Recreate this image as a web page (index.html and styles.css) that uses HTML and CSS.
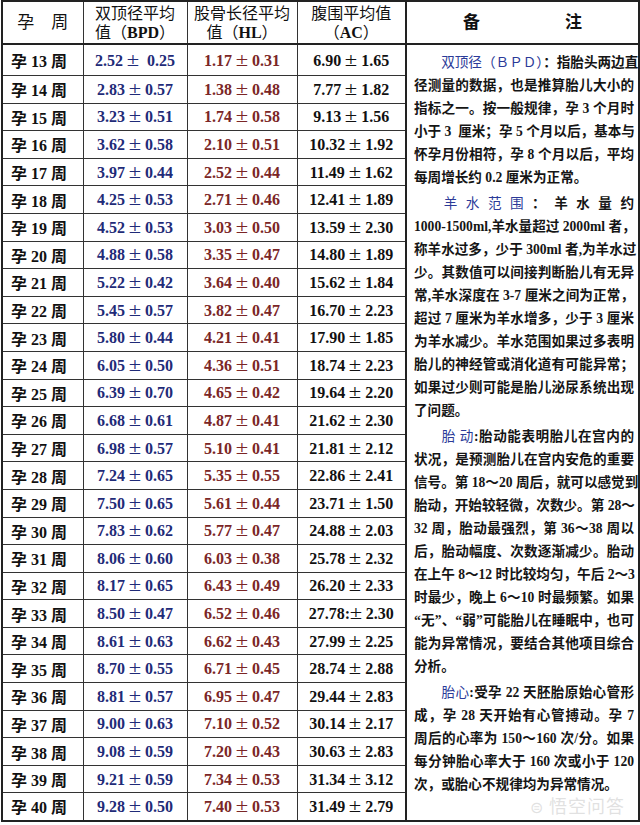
FILE: index.html
```html
<!DOCTYPE html>
<html lang="zh">
<head>
<meta charset="utf-8">
<title>孕周胎儿发育标准</title>
<link rel="stylesheet" href="styles.css">
</head>
<body>
<div class="page">
<table class="grid">
<colgroup><col class="c1"><col class="c2"><col class="c3"><col class="c4"><col class="c5"></colgroup>
<thead>
<tr class="head">
<th class="h-wk">孕　周</th>
<th>双顶径平均<br>值（<b>BPD</b>）</th>
<th>股骨长径平均<br>值（<b>HL</b>）</th>
<th>腹围平均值<br>（<b>AC</b>）</th>
<th class="h-note">备　　　　　注</th>
</tr>
</thead>
<tbody>
<tr class="r1"><td class="wk">孕 13 周</td><td class="bpd">2.52 <i>±</i>&nbsp; 0.25</td><td class="hl">1.17 <i>±</i> 0.31</td><td class="ac">6.90 <i>±</i> 1.65</td>
<td class="note" rowspan="28">
<div class="para">
<span class="ln"><span class="ind"></span><span class="lab">双顶径（ＢＰＤ）</span>：指胎头两边直</span>
<span class="ln">径测量的数据，也是推算胎儿大小的</span>
<span class="ln">指标之一。按一般规律，孕 3 个月时</span>
<span class="ln">小于 3&nbsp; 厘米；孕 5 个月以后，基本与</span>
<span class="ln">怀孕月份相符，孕 8 个月以后，平均</span>
<span class="end">每周增长约 0.2 厘米为正常。</span>
</div>
<div class="para">
<span class="ln"><span class="ind"></span><span class="lab">羊 水 范 围</span> ： 羊 水 量 约</span>
<span class="ln">1000-1500ml,羊水量超过 2000ml 者，</span>
<span class="ln">称羊水过多，少于 300ml 者,为羊水过</span>
<span class="ln">少。其数值可以间接判断胎儿有无异</span>
<span class="ln">常,羊水深度在 3-7 厘米之间为正常，</span>
<span class="ln">超过 7 厘米为羊水增多，少于 3 厘米</span>
<span class="ln">为羊水减少。羊水范围如果过多表明</span>
<span class="ln">胎儿的神经管或消化道有可能异常；</span>
<span class="ln">如果过少则可能是胎儿泌尿系统出现</span>
<span class="end">了问题。</span>
</div>
<div class="para">
<span class="ln"><span class="ind"></span><span class="lab">胎 动</span>:胎动能表明胎儿在宫内的</span>
<span class="ln">状况，是预测胎儿在宫内安危的重要</span>
<span class="ln">信号。第 18～20 周后，就可以感觉到</span>
<span class="ln">胎动，开始较轻微，次数少。第 28～</span>
<span class="ln">32 周，胎动最强烈，第 36～38 周以</span>
<span class="ln">后，胎动幅度、次数逐渐减少。胎动</span>
<span class="ln">在上午 8～12 时比较均匀，午后 2～3</span>
<span class="ln">时最少，晚上 6～10 时最频繁。如果</span>
<span class="ln">“无”、“弱”可能胎儿在睡眠中，也可</span>
<span class="ln">能为异常情况，要结合其他项目综合</span>
<span class="end">分析。</span>
</div>
<div class="para">
<span class="ln"><span class="ind"></span><span class="lab">胎心</span>:受孕 22 天胚胎原始心管形</span>
<span class="ln">成，孕 28 天开始有心管搏动。孕 7</span>
<span class="ln">周后的心率为 150～160 次/分。如果</span>
<span class="ln">每分钟胎心率大于 160 次或小于 120</span>
<span class="end">次，或胎心不规律均为异常情况。</span>
</div>
</td></tr>
<tr><td class="wk">孕 14 周</td><td class="bpd">2.83 <i>±</i> 0.57</td><td class="hl">1.38 <i>±</i> 0.48</td><td class="ac">7.77 <i>±</i> 1.82</td></tr>
<tr><td class="wk">孕 15 周</td><td class="bpd">3.23 <i>±</i> 0.51</td><td class="hl">1.74 <i>±</i> 0.58</td><td class="ac">9.13 <i>±</i> 1.56</td></tr>
<tr><td class="wk">孕 16 周</td><td class="bpd">3.62 <i>±</i> 0.58</td><td class="hl">2.10 <i>±</i> 0.51</td><td class="ac">10.32 <i>±</i> 1.92</td></tr>
<tr><td class="wk">孕 17 周</td><td class="bpd">3.97 <i>±</i> 0.44</td><td class="hl">2.52 <i>±</i> 0.44</td><td class="ac">11.49 <i>±</i> 1.62</td></tr>
<tr><td class="wk">孕 18 周</td><td class="bpd">4.25 <i>±</i> 0.53</td><td class="hl">2.71 <i>±</i> 0.46</td><td class="ac">12.41 <i>±</i> 1.89</td></tr>
<tr><td class="wk">孕 19 周</td><td class="bpd">4.52 <i>±</i> 0.53</td><td class="hl">3.03 <i>±</i> 0.50</td><td class="ac">13.59 <i>±</i> 2.30</td></tr>
<tr><td class="wk">孕 20 周</td><td class="bpd">4.88 <i>±</i> 0.58</td><td class="hl">3.35 <i>±</i> 0.47</td><td class="ac">14.80 <i>±</i> 1.89</td></tr>
<tr><td class="wk">孕 21 周</td><td class="bpd">5.22 <i>±</i> 0.42</td><td class="hl">3.64 <i>±</i> 0.40</td><td class="ac">15.62 <i>±</i> 1.84</td></tr>
<tr><td class="wk">孕 22 周</td><td class="bpd">5.45 <i>±</i> 0.57</td><td class="hl">3.82 <i>±</i> 0.47</td><td class="ac">16.70 <i>±</i> 2.23</td></tr>
<tr><td class="wk">孕 23 周</td><td class="bpd">5.80 <i>±</i> 0.44</td><td class="hl">4.21 <i>±</i> 0.41</td><td class="ac">17.90 <i>±</i> 1.85</td></tr>
<tr><td class="wk">孕 24 周</td><td class="bpd">6.05 <i>±</i> 0.50</td><td class="hl">4.36 <i>±</i> 0.51</td><td class="ac">18.74 <i>±</i> 2.23</td></tr>
<tr><td class="wk">孕 25 周</td><td class="bpd">6.39 <i>±</i> 0.70</td><td class="hl">4.65 <i>±</i> 0.42</td><td class="ac">19.64 <i>±</i> 2.20</td></tr>
<tr><td class="wk">孕 26 周</td><td class="bpd">6.68 <i>±</i> 0.61</td><td class="hl">4.87 <i>±</i> 0.41</td><td class="ac">21.62 <i>±</i> 2.30</td></tr>
<tr><td class="wk">孕 27 周</td><td class="bpd">6.98 <i>±</i> 0.57</td><td class="hl">5.10 <i>±</i> 0.41</td><td class="ac">21.81 <i>±</i> 2.12</td></tr>
<tr><td class="wk">孕 28 周</td><td class="bpd">7.24 <i>±</i> 0.65</td><td class="hl">5.35 <i>±</i> 0.55</td><td class="ac">22.86 <i>±</i> 2.41</td></tr>
<tr><td class="wk">孕 29 周</td><td class="bpd">7.50 <i>±</i> 0.65</td><td class="hl">5.61 <i>±</i> 0.44</td><td class="ac">23.71 <i>±</i> 1.50</td></tr>
<tr><td class="wk">孕 30 周</td><td class="bpd">7.83 <i>±</i> 0.62</td><td class="hl">5.77 <i>±</i> 0.47</td><td class="ac">24.88 <i>±</i> 2.03</td></tr>
<tr><td class="wk">孕 31 周</td><td class="bpd">8.06 <i>±</i> 0.60</td><td class="hl">6.03 <i>±</i> 0.38</td><td class="ac">25.78 <i>±</i> 2.32</td></tr>
<tr><td class="wk">孕 32 周</td><td class="bpd">8.17 <i>±</i> 0.65</td><td class="hl">6.43 <i>±</i> 0.49</td><td class="ac">26.20 <i>±</i> 2.33</td></tr>
<tr><td class="wk">孕 33 周</td><td class="bpd">8.50 <i>±</i> 0.47</td><td class="hl">6.52 <i>±</i> 0.46</td><td class="ac">27.78:<i>±</i> 2.30</td></tr>
<tr><td class="wk">孕 34 周</td><td class="bpd">8.61 <i>±</i> 0.63</td><td class="hl">6.62 <i>±</i> 0.43</td><td class="ac">27.99 <i>±</i> 2.25</td></tr>
<tr><td class="wk">孕 35 周</td><td class="bpd">8.70 <i>±</i> 0.55</td><td class="hl">6.71 <i>±</i> 0.45</td><td class="ac">28.74 <i>±</i> 2.88</td></tr>
<tr><td class="wk">孕 36 周</td><td class="bpd">8.81 <i>±</i> 0.57</td><td class="hl">6.95 <i>±</i> 0.47</td><td class="ac">29.44 <i>±</i> 2.83</td></tr>
<tr><td class="wk">孕 37 周</td><td class="bpd">9.00 <i>±</i> 0.63</td><td class="hl">7.10 <i>±</i> 0.52</td><td class="ac">30.14 <i>±</i> 2.17</td></tr>
<tr><td class="wk">孕 38 周</td><td class="bpd">9.08 <i>±</i> 0.59</td><td class="hl">7.20 <i>±</i> 0.43</td><td class="ac">30.63 <i>±</i> 2.83</td></tr>
<tr><td class="wk">孕 39 周</td><td class="bpd">9.21 <i>±</i> 0.59</td><td class="hl">7.34 <i>±</i> 0.53</td><td class="ac">31.34 <i>±</i> 3.12</td></tr>
<tr><td class="wk">孕 40 周</td><td class="bpd">9.28 <i>±</i> 0.50</td><td class="hl">7.40 <i>±</i> 0.53</td><td class="ac">31.49 <i>±</i> 2.79</td></tr>
</tbody>
</table>
<div class="mark"><span class="mark-logo">⊜</span> 悟空问答</div>
</div>
</body>
</html>
```
FILE: styles.css
```css
html, body {
  margin: 0;
  padding: 0;
  background: #ffffff;
}

.page {
  position: relative;
  width: 640px;
  height: 825px;
  overflow: hidden;
}

.grid {
  border-collapse: collapse;
  table-layout: fixed;
  width: 637px;
  margin: 0 0 0 1px;
  font-family: "Liberation Serif", "Noto Sans CJK SC", serif;
  color: #111;
  border: 2px solid #222;
}

.c1 { width: 81px; }
.c2 { width: 104px; }
.c3 { width: 110px; }
.c4 { width: 109px; }
.c5 { width: 233px; }

.grid th,
.grid td {
  border: 1px solid #333;
  padding: 0;
}

.grid .head {
  height: 43px;
}

.grid .head th {
  font-weight: normal;
  font-size: 16px;
  line-height: 19px;
  text-align: center;
  vertical-align: middle;
  border-bottom: 2px solid #222;
}

.grid .head th b {
  font-weight: bold;
}

.grid .head .h-wk {
  font-size: 17px;
}

.grid .head .h-note {
  font-size: 17px;
  font-weight: bold;
  border-left: 2px solid #222;
}

.grid tbody tr {
  height: 27.6px;
}

.grid tbody tr.r1 {
  height: 31.5px;
}

.grid .wk,
.grid .bpd,
.grid .hl,
.grid .ac {
  font-size: 16px;
  font-weight: bold;
  white-space: nowrap;
  vertical-align: middle;
}

.grid .wk {
  text-align: left;
  padding-left: 8px;
}

.grid .bpd,
.grid .hl,
.grid .ac {
  text-align: center;
}

.grid .bpd i,
.grid .hl i,
.grid .ac i {
  font-style: normal;
  font-size: 18px;
  font-weight: normal;
  display: inline-block;
  transform: scaleX(1.25);
  margin: 0 1px;
}

.grid .bpd { color: #1f2b78; }
.grid .hl { color: #7b2626; }
.grid .ac { color: #111; }

.grid .note {
  vertical-align: top;
  border-left: 2px solid #222;
  padding: 6px 4px 0 7px;
  font-size: 13.6px;
  font-weight: bold;
  line-height: 23.1px;
  color: #151515;
}

.para + .para {
  margin-top: 2px;
}

.ln,
.end {
  display: block;
  white-space: nowrap;
}

.ln {
  text-align: justify;
  text-align-last: justify;
}

.end {
  text-align: left;
}

.ind {
  display: inline-block;
  width: 2em;
}

.lab {
  color: #2b3a98;
  font-weight: normal;
}

.mark {
  position: absolute;
  left: 530px;
  top: 795px;
  font-family: "Noto Sans CJK SC", sans-serif;
  font-size: 18px;
  line-height: 20px;
  color: rgba(200, 200, 200, 0.55);
  letter-spacing: 1px;
}

.mark-logo {
  font-size: 16px;
}
```
